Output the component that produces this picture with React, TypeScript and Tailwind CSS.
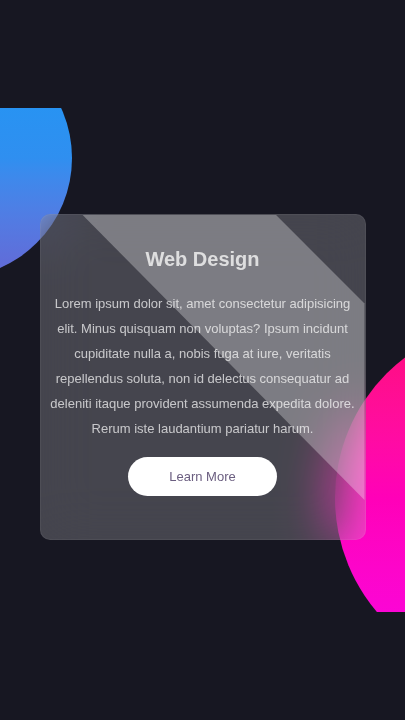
export default function App() {
  return (
    <div className="min-h-screen bg-[#171722] py-[108px] font-['Liberation_Sans',Arial,sans-serif]">
      <section className="relative flex h-[504px] justify-center overflow-hidden pt-[106px]">
        {/* background blobs */}
        <div className="absolute left-[-168px] top-[-70px] h-[240px] w-[240px] rounded-full bg-gradient-to-b from-[#1a98f5] via-[#2f8ff0] to-[#6368d6]" />
        <div className="absolute left-[335px] top-[214px] h-[352px] w-[352px] rounded-full bg-gradient-to-b from-[#ff0a78] via-[#ff00b8] to-[#fa00e4]" />

        {/* glass card */}
        <div className="relative h-[326px] w-[326px] overflow-hidden rounded-[10px] border border-white/5 bg-white/20 px-[9px] text-center backdrop-blur-[26px]">
          <div className="pointer-events-none absolute inset-0 bg-white/30 [clip-path:polygon(13%_0,72.7%_0,100%_27.3%,100%_88%)]" />
          <div className="relative flex flex-col items-center pt-[32px]">
            <h2 className="text-[20px] font-bold leading-6 text-white/75">Web Design</h2>
            <p className="mt-5 text-[13px] leading-[25px] text-white/70">
              Lorem ipsum dolor sit, amet consectetur adipisicing elit. Minus quisquam non voluptas? Ipsum incidunt
              cupiditate nulla a, nobis fuga at iure, veritatis repellendus soluta, non id delectus consequatur ad
              deleniti itaque provident assumenda expedita dolore. Rerum iste laudantium pariatur harum.
            </p>
            <button className="mt-4 h-[39px] w-[149px] rounded-full bg-white text-[13px] text-[#6b5e80]">
              Learn More
            </button>
          </div>
        </div>
      </section>
    </div>
  )
}
